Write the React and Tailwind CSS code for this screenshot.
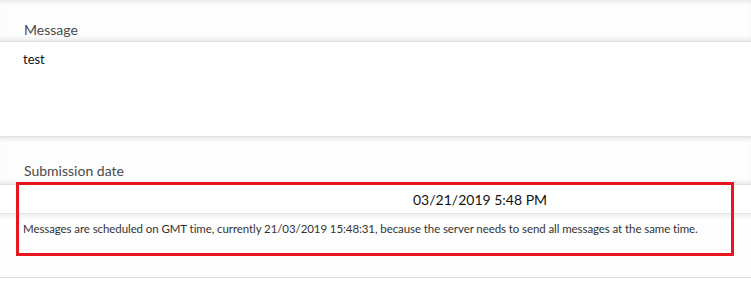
export default function App() {
  const band =
    "bg-[#fdfdfd] shadow-[inset_0_5px_4px_-3px_rgba(0,0,0,0.09),inset_0_-5px_4px_-3px_rgba(0,0,0,0.09)]";

  return (
    <div className="relative w-[751px] h-[281px] bg-white overflow-hidden font-['Lato',sans-serif]">
      {/* Message label */}
      <div className={`h-[42px] ${band} border-b border-[#e2e2e2] px-6 pt-[17px]`}>
        <span className="text-[14px] leading-[18px] text-[#4a4a4a]">Message</span>
      </div>

      {/* Message textarea */}
      <div className="h-[95px] bg-white border-b border-[#e2e2e2] px-[23px] pt-[4px]">
        <span className="text-[13px] leading-[18px] text-[#111]">test</span>
      </div>

      {/* Submission date label */}
      <div className={`h-[48px] ${band} border-b border-[#e2e2e2] px-6 pt-[21px]`}>
        <span className="text-[14px] leading-[18px] text-[#4a4a4a]">Submission date</span>
      </div>

      {/* Date input */}
      <div className="h-[29px] bg-white border-b border-[#e2e2e2] pl-[413px] pt-[2px]">
        <span className="text-[14px] leading-[18px] text-[#111]">03/21/2019 5:48 PM</span>
      </div>

      {/* Help text */}
      <div className="h-[64px] bg-[#fefefe] border-b border-[#dcdcdc] shadow-[inset_0_5px_4px_-3px_rgba(0,0,0,0.08)] px-[23px] pt-[7px]">
        <p className="text-[11.5px] leading-[16px] text-[#333] tracking-[-0.085px]">
          Messages are scheduled on GMT time, currently 21/03/2019 15:48:31, because the server needs to send all messages at the same time.
        </p>
      </div>

      {/* Red annotation box */}
      <div className="absolute left-[16px] top-[182px] w-[718px] h-[74px] border-[3px] border-[#e8161f] pointer-events-none" />
    </div>
  );
}
